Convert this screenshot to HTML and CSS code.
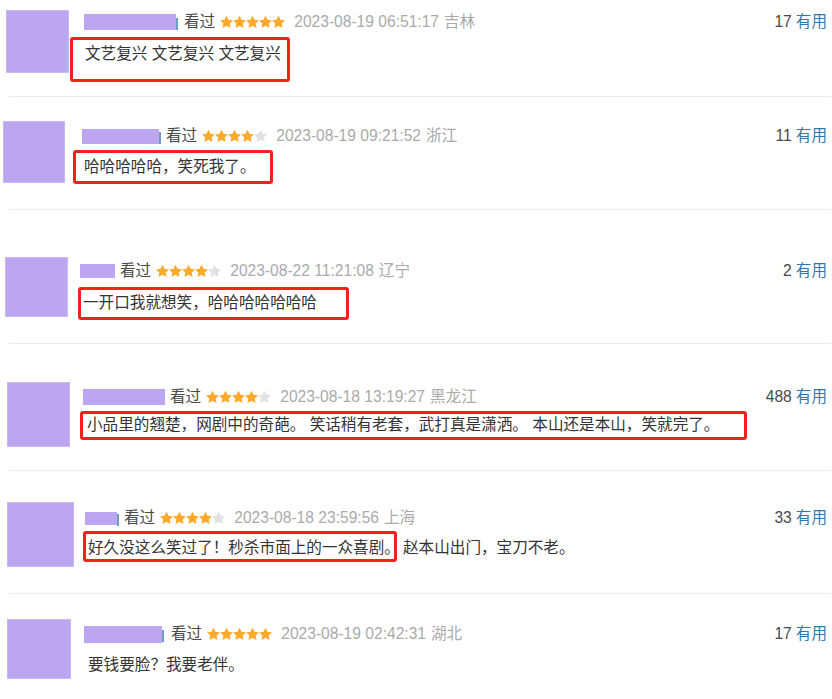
FILE: index.html
```html
<!DOCTYPE html>
<html lang="zh-CN">
<head>
<meta charset="utf-8">
<title>短评</title>
<link rel="stylesheet" href="styles.css">
</head>
<body>
<svg width="0" height="0" class="defs" aria-hidden="true">
  <defs>
    <polygon id="star" points="10,0.4 13.1,6.6 19.9,7.5 14.9,12.2 16.2,19.2 10,15.9 3.8,19.2 5.1,12.2 0.1,7.5 6.9,6.6"/>
  </defs>
</svg>

<div class="list">

  <div class="comment r1">
    <div class="avatar"></div>
    <div class="main">
      <div class="head">
        <span class="name"></span><span class="tail"></span>
        <span class="watched">看过</span>
        <span class="stars s5"><svg viewBox="0 0 20 20"><use href="#star"/></svg><svg viewBox="0 0 20 20"><use href="#star"/></svg><svg viewBox="0 0 20 20"><use href="#star"/></svg><svg viewBox="0 0 20 20"><use href="#star"/></svg><svg viewBox="0 0 20 20"><use href="#star"/></svg></span>
        <span class="time">2023-08-19 06:51:17</span><span class="loc">吉林</span>
        <span class="votes"><span class="num">17</span><span class="useful">有用</span></span>
      </div>
      <div class="content"><span class="mark">文艺复兴 文艺复兴 文艺复兴</span></div>
    </div>
  </div>
  <div class="sep"></div>

  <div class="comment r2">
    <div class="avatar"></div>
    <div class="main">
      <div class="head">
        <span class="name"></span><span class="tail"></span>
        <span class="watched">看过</span>
        <span class="stars s4"><svg viewBox="0 0 20 20"><use href="#star"/></svg><svg viewBox="0 0 20 20"><use href="#star"/></svg><svg viewBox="0 0 20 20"><use href="#star"/></svg><svg viewBox="0 0 20 20"><use href="#star"/></svg><svg viewBox="0 0 20 20"><use href="#star"/></svg></span>
        <span class="time">2023-08-19 09:21:52</span><span class="loc">浙江</span>
        <span class="votes"><span class="num">11</span><span class="useful">有用</span></span>
      </div>
      <div class="content"><span class="mark">哈哈哈哈哈，笑死我了。</span></div>
    </div>
  </div>
  <div class="sep"></div>

  <div class="comment r3">
    <div class="avatar"></div>
    <div class="main">
      <div class="head">
        <span class="name"></span>
        <span class="watched">看过</span>
        <span class="stars s4"><svg viewBox="0 0 20 20"><use href="#star"/></svg><svg viewBox="0 0 20 20"><use href="#star"/></svg><svg viewBox="0 0 20 20"><use href="#star"/></svg><svg viewBox="0 0 20 20"><use href="#star"/></svg><svg viewBox="0 0 20 20"><use href="#star"/></svg></span>
        <span class="time">2023-08-22 11:21:08</span><span class="loc">辽宁</span>
        <span class="votes"><span class="num">2</span><span class="useful">有用</span></span>
      </div>
      <div class="content"><span class="mark">一开口我就想笑，哈哈哈哈哈哈哈</span></div>
    </div>
  </div>
  <div class="sep"></div>

  <div class="comment r4">
    <div class="avatar"></div>
    <div class="main">
      <div class="head">
        <span class="name"></span>
        <span class="watched">看过</span>
        <span class="stars s4"><svg viewBox="0 0 20 20"><use href="#star"/></svg><svg viewBox="0 0 20 20"><use href="#star"/></svg><svg viewBox="0 0 20 20"><use href="#star"/></svg><svg viewBox="0 0 20 20"><use href="#star"/></svg><svg viewBox="0 0 20 20"><use href="#star"/></svg></span>
        <span class="time">2023-08-18 13:19:27</span><span class="loc">黑龙江</span>
        <span class="votes"><span class="num">488</span><span class="useful">有用</span></span>
      </div>
      <div class="content"><span class="mark">小品里的翘楚，网剧中的奇葩。 笑话稍有老套，武打真是潇洒。 本山还是本山，笑就完了。</span></div>
    </div>
  </div>
  <div class="sep"></div>

  <div class="comment r5">
    <div class="avatar"></div>
    <div class="main">
      <div class="head">
        <span class="name"></span><span class="tail"></span>
        <span class="watched">看过</span>
        <span class="stars s4"><svg viewBox="0 0 20 20"><use href="#star"/></svg><svg viewBox="0 0 20 20"><use href="#star"/></svg><svg viewBox="0 0 20 20"><use href="#star"/></svg><svg viewBox="0 0 20 20"><use href="#star"/></svg><svg viewBox="0 0 20 20"><use href="#star"/></svg></span>
        <span class="time">2023-08-18 23:59:56</span><span class="loc">上海</span>
        <span class="votes"><span class="num">33</span><span class="useful">有用</span></span>
      </div>
      <div class="content"><span class="mark">好久没这么笑过了！秒杀市面上的一众喜剧。</span><span class="rest">赵本山出门，宝刀不老。</span></div>
    </div>
  </div>
  <div class="sep"></div>

  <div class="comment r6">
    <div class="avatar"></div>
    <div class="main">
      <div class="head">
        <span class="name"></span><span class="tail"></span>
        <span class="watched">看过</span>
        <span class="stars s5"><svg viewBox="0 0 20 20"><use href="#star"/></svg><svg viewBox="0 0 20 20"><use href="#star"/></svg><svg viewBox="0 0 20 20"><use href="#star"/></svg><svg viewBox="0 0 20 20"><use href="#star"/></svg><svg viewBox="0 0 20 20"><use href="#star"/></svg></span>
        <span class="time">2023-08-19 02:42:31</span><span class="loc">湖北</span>
        <span class="votes"><span class="num">17</span><span class="useful">有用</span></span>
      </div>
      <div class="content plain"><span class="text">要钱要脸？我要老伴。</span></div>
    </div>
  </div>

</div>
</body>
</html>
```

FILE: styles.css
```css
* { box-sizing: border-box; }

html, body {
  margin: 0;
  padding: 0;
  background: #ffffff;
}

body {
  width: 832px;
  height: 699px;
  overflow: hidden;
  font-family: "Liberation Sans", "Noto Sans CJK SC", sans-serif;
  font-size: 15.6px;
  color: #494949;
}

.defs { position: absolute; }

.list {
  display: flex;
  flex-direction: column;
}

.comment {
  display: flex;
  align-items: flex-start;
  height: var(--h);
  padding: var(--pt) 5px 0 var(--ax);
}

.avatar {
  flex: none;
  width: var(--aw);
  height: var(--ah);
  background: #bca6f0;
  box-shadow: inset 0 0 0 1px #c9b8f3;
}

.main {
  flex: 1;
  margin-left: var(--gap);
  padding-top: var(--ht);
  min-width: 0;
}

.head {
  display: flex;
  align-items: center;
  height: 20px;
  line-height: 20px;
  white-space: nowrap;
}

.name {
  flex: none;
  width: var(--nw);
  height: var(--nh);
  background: #bca6f0;
}

.tail {
  flex: none;
  width: 2px;
  height: 12px;
  margin-top: 3px;
  background: #6f9cc4;
}

.watched {
  margin-left: var(--ng);
  color: #494949;
}

.stars {
  display: flex;
  margin-left: 5px;
}

.stars svg {
  flex: none;
  width: 13px;
  height: 14px;
  fill: #ffa92a;
}

.stars.s4 svg:last-child { fill: #e1e1e1; }

.time {
  margin-left: 9px;
  color: #aaaaaa;
}

.loc {
  margin-left: 5px;
  color: #aaaaaa;
}

.votes {
  margin-left: auto;
}

.num { color: #494949; }

.useful {
  margin-left: 4px;
  color: #3377aa;
}

.content {
  margin-top: var(--cm);
  margin-left: var(--bx);
  line-height: 20px;
  color: #333333;
  white-space: nowrap;
}

.mark {
  display: inline-block;
  vertical-align: top;
  width: var(--bw);
  height: var(--bh);
  padding: var(--bpt) 0 0 var(--bpl);
  border: 3px solid #f4201b;
  border-radius: 3px;
}

.rest {
  display: inline-block;
  vertical-align: top;
  margin-left: 6px;
  padding-top: calc(var(--bpt) + 3px);
}

.content.plain .text { padding-left: 4px; }

.sep {
  height: 1px;
  margin: 0 1px 0 9px;
  background: #ececec;
}

/* per-row geometry (collage of separate screenshots) */
.r1 { --h: 96px;  --pt: 10px; --ax: 6px; --aw: 63px; --ah: 63px; --gap: 15px; --ht: 2px;
      --nw: 92px; --nh: 16px; --ng: 6px;
      --cm: 5px; --bx: -14px; --bw: 220px; --bh: 45px; --bpl: 12px; --bpt: 4px; }
.r2 { --h: 112px; --pt: 24px; --ax: 3px; --aw: 62px; --ah: 62px; --gap: 17px; --ht: 5px;
      --nw: 77px; --nh: 15px; --ng: 5px;
      --cm: 4px; --bx: -9px; --bw: 200px; --bh: 34px; --bpl: 8px; --bpt: 4px; }
.r3 { --h: 133px; --pt: 47px; --ax: 5px; --aw: 63px; --ah: 60px; --gap: 12px; --ht: 4px;
      --nw: 35px; --nh: 14px; --ng: 5px;
      --cm: 6px; --bx: -2px; --bw: 271px; --bh: 33px; --bpl: 2px; --bpt: 3px; }
.r4 { --h: 126px; --pt: 38px; --ax: 7px; --aw: 63px; --ah: 65px; --gap: 13px; --ht: 5px;
      --nw: 82px; --nh: 16px; --ng: 5px;
      --cm: 4px; --bx: -3px; --bw: 667px; --bh: 29px; --bpl: 4px; --bpt: 1px; }
.r5 { --h: 122px; --pt: 31px; --ax: 7px; --aw: 67px; --ah: 65px; --gap: 11px; --ht: 6px;
      --nw: 32px; --nh: 13px; --ng: 5px;
      --cm: 3px; --bx: -2px; --bw: 314px; --bh: 31px; --bpl: 2px; --bpt: 4px; }
.r6 { --h: 105px; --pt: 25px; --ax: 7px; --aw: 64px; --ah: 60px; --gap: 13px; --ht: 5px;
      --nw: 78px; --nh: 17px; --ng: 7px;
      --cm: 11px; --bx: 0px; }
```
